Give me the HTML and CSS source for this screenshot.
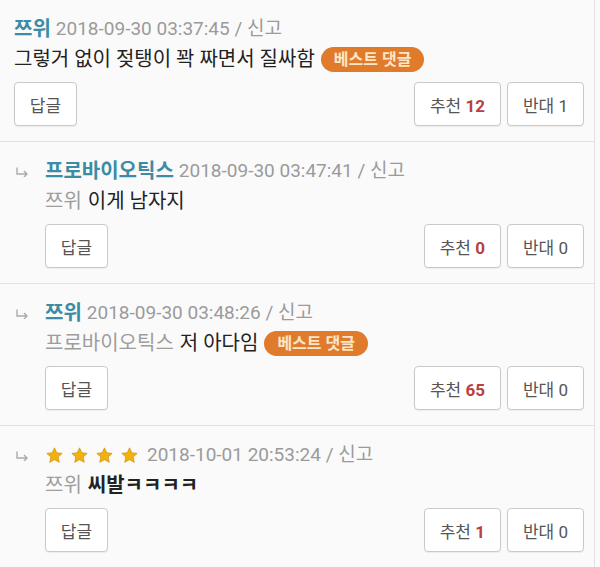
FILE: index.html
```html
<!DOCTYPE html>
<html lang="ko">
<head>
<meta charset="utf-8">
<title>댓글</title>
<link rel="stylesheet" href="styles.css">
</head>
<body>
<div class="list">
  <div class="comment">
    <div class="main">
      <div class="head"><span class="name">쯔위</span> <span class="meta">2018-09-30 03:37:45 / 신고</span></div>
      <div class="text">그렇거 없이 젖탱이 꽉 짜면서 질싸함 <span class="badge">베스트 댓글</span></div>
      <div class="actions">
        <button class="btn reply-btn">답글</button>
        <div class="votes">
          <button class="btn">추천 <b class="up">12</b></button>
          <button class="btn">반대 1</button>
        </div>
      </div>
    </div>
  </div>

  <div class="comment reply">
    <svg class="arrow" width="14" height="10" viewBox="0 0 14 10"><path d="M2 0.5V7H12M9 4L12 7L9 10" fill="none" stroke="#aaa" stroke-width="1.4"/></svg>
    <div class="main">
      <div class="head"><span class="name">프로바이오틱스</span> <span class="meta">2018-09-30 03:47:41 / 신고</span></div>
      <div class="text"><span class="to">쯔위</span> 이게 남자지</div>
      <div class="actions">
        <button class="btn reply-btn">답글</button>
        <div class="votes">
          <button class="btn">추천 <b class="up">0</b></button>
          <button class="btn">반대 0</button>
        </div>
      </div>
    </div>
  </div>

  <div class="comment reply">
    <svg class="arrow" width="14" height="10" viewBox="0 0 14 10"><path d="M2 0.5V7H12M9 4L12 7L9 10" fill="none" stroke="#aaa" stroke-width="1.4"/></svg>
    <div class="main">
      <div class="head"><span class="name">쯔위</span> <span class="meta">2018-09-30 03:48:26 / 신고</span></div>
      <div class="text"><span class="to">프로바이오틱스</span> 저 아다임 <span class="badge">베스트 댓글</span></div>
      <div class="actions">
        <button class="btn reply-btn">답글</button>
        <div class="votes">
          <button class="btn">추천 <b class="up">65</b></button>
          <button class="btn">반대 0</button>
        </div>
      </div>
    </div>
  </div>

  <div class="comment reply">
    <svg class="arrow" width="14" height="10" viewBox="0 0 14 10"><path d="M2 0.5V7H12M9 4L12 7L9 10" fill="none" stroke="#aaa" stroke-width="1.4"/></svg>
    <div class="main">
      <div class="head">
        <span class="stars">
          <svg class="star" viewBox="0 0 20 20"><path d="M10 1l2.7 5.8 6.3.7-4.7 4.3 1.3 6.2L10 14.9 4.4 18l1.3-6.2L1 7.5l6.3-.7z"/></svg>
          <svg class="star" viewBox="0 0 20 20"><path d="M10 1l2.7 5.8 6.3.7-4.7 4.3 1.3 6.2L10 14.9 4.4 18l1.3-6.2L1 7.5l6.3-.7z"/></svg>
          <svg class="star" viewBox="0 0 20 20"><path d="M10 1l2.7 5.8 6.3.7-4.7 4.3 1.3 6.2L10 14.9 4.4 18l1.3-6.2L1 7.5l6.3-.7z"/></svg>
          <svg class="star" viewBox="0 0 20 20"><path d="M10 1l2.7 5.8 6.3.7-4.7 4.3 1.3 6.2L10 14.9 4.4 18l1.3-6.2L1 7.5l6.3-.7z"/></svg>
        </span>
        <span class="meta">2018-10-01 20:53:24 / 신고</span>
      </div>
      <div class="text"><span class="to">쯔위</span> <span class="strong">씨발ㅋㅋㅋㅋ</span></div>
      <div class="actions">
        <button class="btn reply-btn">답글</button>
        <div class="votes">
          <button class="btn">추천 <b class="up">1</b></button>
          <button class="btn">반대 0</button>
        </div>
      </div>
    </div>
  </div>
</div>
</body>
</html>
```

FILE: styles.css
```css
html, body {
  margin: 0;
  padding: 0;
  background: #fafafa;
}

body {
  font-family: Roboto, "Noto Sans CJK KR", sans-serif;
  color: #222;
}

.list {
  width: 595px;
  border-right: 1px solid #e2e2e2;
  box-sizing: border-box;
  background: #fafafa;
}

.comment {
  display: grid;
  grid-template-columns: 1fr;
  padding: 14px 10px 15px 14px;
  border-bottom: 1px solid #e3e3e3;
}

.comment.reply {
  grid-template-columns: 31px 1fr;
}

.arrow {
  margin-top: 11px;
  margin-left: 1px;
}

.head {
  height: 30px;
  line-height: 30px;
  font-size: 20px;
  white-space: nowrap;
  display: flex;
  align-items: center;
  gap: 5px;
}

.name {
  color: #3b8ca4;
  font-weight: bold;
}

.meta {
  color: #9b9b9b;
  font-size: 19px;
}

.stars {
  display: inline-flex;
  gap: 8px;
  margin-left: 1px;
  margin-right: 4px;
}

.star {
  width: 17px;
  height: 17px;
  fill: #f2b20d;
  stroke: #d08c00;
  stroke-width: 0.8;
}

.text {
  height: 30px;
  line-height: 30px;
  font-size: 20px;
  white-space: nowrap;
  display: flex;
  align-items: center;
}

.text .to {
  color: #9d9d9d;
  margin-right: 6px;
}

.text .strong {
  font-weight: bold;
  color: #222;
}

.badge {
  display: inline-block;
  margin-left: 6px;
  height: 25px;
  line-height: 25px;
  padding: 0 13px;
  border-radius: 13px;
  background: #e07b2b;
  color: #fbe6c8;
  font-size: 16px;
  font-weight: bold;
}

.actions {
  margin-top: 8px;
  display: flex;
  justify-content: space-between;
}

.votes {
  display: flex;
  gap: 6px;
}

.btn {
  height: 44px;
  padding: 0 15px;
  border: 1px solid #c9c9c9;
  border-radius: 4px;
  background: #fff;
  box-shadow: 0 1px 1px rgba(0, 0, 0, 0.06);
  font-family: Roboto, "Noto Sans CJK KR", sans-serif;
  font-size: 17px;
  color: #555;
}

.reply-btn {
  width: 63px;
  padding: 0;
}

.up {
  color: #b8423b;
  font-weight: bold;
}
```
